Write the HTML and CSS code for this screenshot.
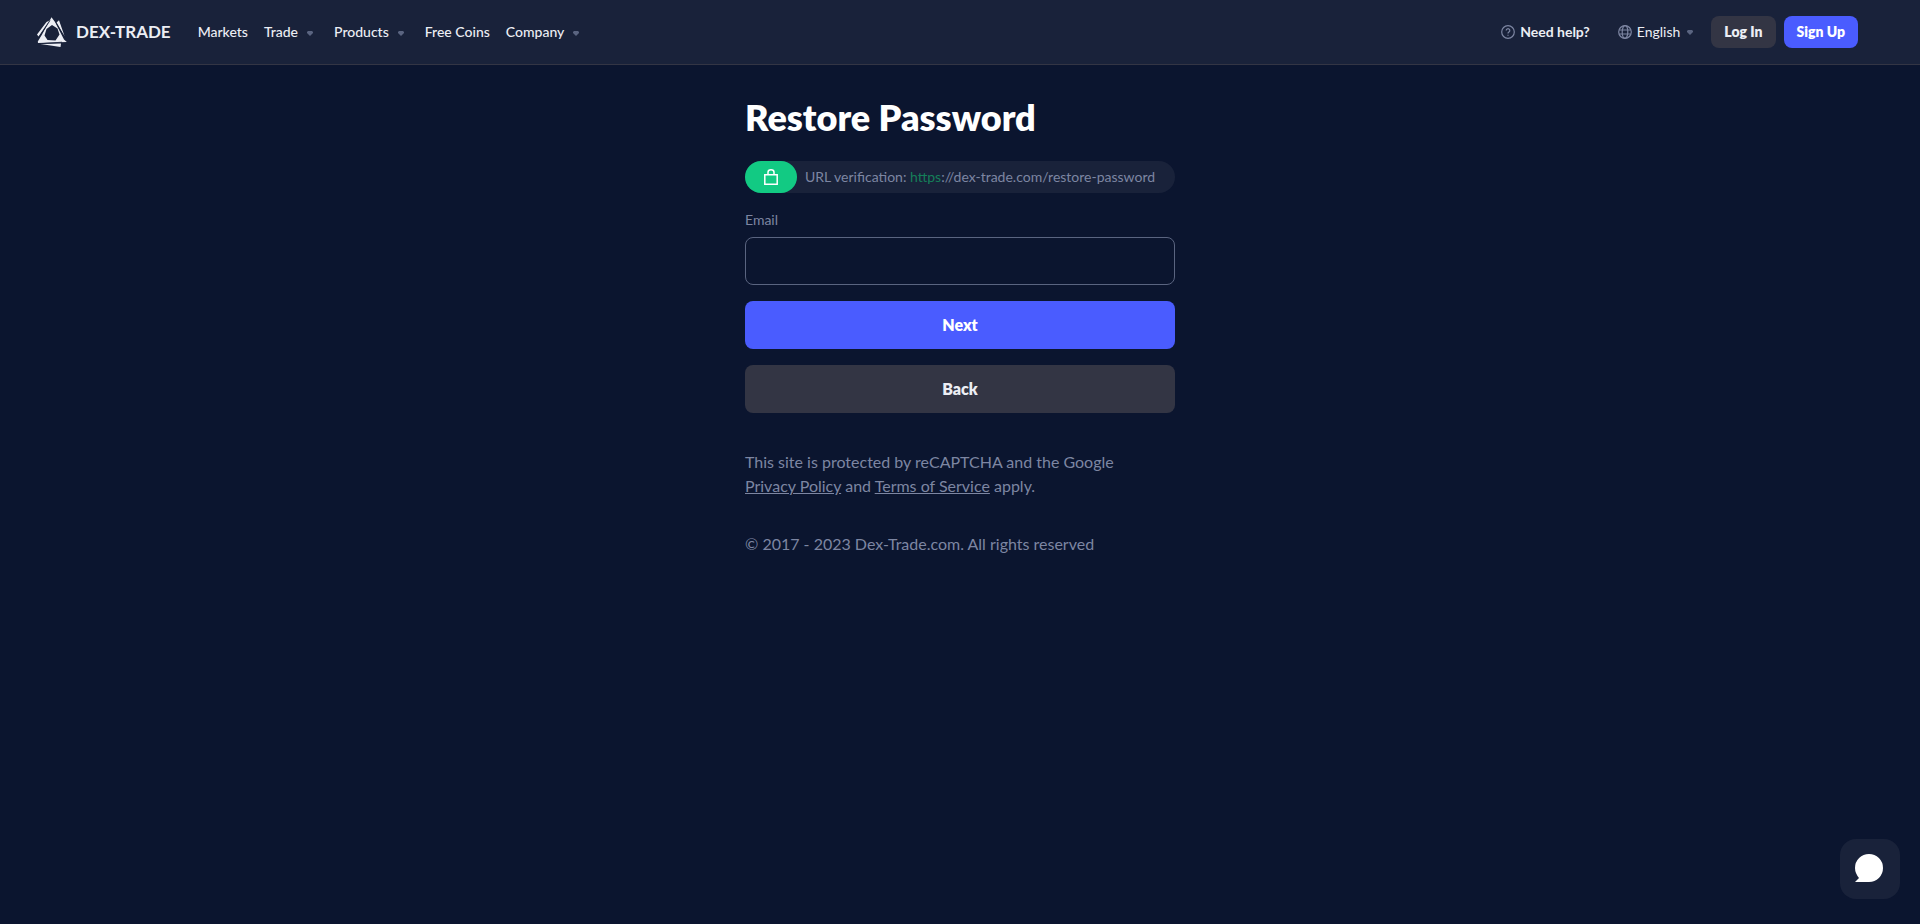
FILE: index.html
```html
<!DOCTYPE html>
<html lang="en">
<head>
<meta charset="utf-8">
<meta name="viewport" content="width=device-width, initial-scale=1">
<title>Restore Password | Dex-Trade</title>
<link rel="stylesheet" href="styles.css">
</head>
<body>
<header class="header">
  <a class="logo" href="#">
    <svg class="logo-mark" viewBox="0 0 30 30" aria-hidden="true">
      <path fill="#eceef4" fill-rule="evenodd" d="M14.500 .3 18 5 27 22.500 29.800 25 1 26 .8 24.500 5 17.500ZM15 8 9.500 12 7.500 18.500 10.500 23 18.500 23.500 22.500 17.500 20.500 11.500Z"/>
      <path fill="#eceef4" d="M19.500 5.500 22 3.300 27.500 19ZM9.500 5 12.500 3.500 1.500 19.500 0 17.500ZM3.500 27 24 26.600 23.500 30Z"/>
      <path stroke="#19223a" stroke-width=".8" fill="none" d="M13 3.500 3 18.800M18 3.500 27.500 21M5 26.600 25 25.200"/>
    </svg>
    <span>DEX-TRADE</span>
  </a>
  <nav class="nav">
    <a href="#">Markets</a>
    <button class="menu" type="button">Trade<svg class="caret" viewBox="0 0 6 5" aria-hidden="true"><path d="M1 0H5L6 1V2L3 5 0 2V1Z"/></svg></button>
    <button class="menu" type="button">Products<svg class="caret" viewBox="0 0 6 5" aria-hidden="true"><path d="M1 0H5L6 1V2L3 5 0 2V1Z"/></svg></button>
    <a href="#">Free Coins</a>
    <button class="menu" type="button">Company<svg class="caret" viewBox="0 0 6 5" aria-hidden="true"><path d="M1 0H5L6 1V2L3 5 0 2V1Z"/></svg></button>
  </nav>
  <div class="actions">
    <a class="help" href="#"><svg class="icon" viewBox="0 0 14 14" aria-hidden="true"><circle cx="7" cy="7" r="6.300"/><path d="M5.200 5.500a1.800 1.800 0 1 1 2.700 1.600Q7 7.600 7 8.500M7 9.700v1.100"/></svg>Need help?</a>
    <button class="language" type="button"><svg class="icon" viewBox="0 0 14 14" aria-hidden="true"><circle cx="7" cy="7" r="6.300"/><ellipse cx="7" cy="7" rx="2.800" ry="6.300"/><path d="M1.200 5H12.800M1.200 9H12.800"/></svg>English<svg class="caret" viewBox="0 0 6 5" aria-hidden="true"><path d="M1 0H5L6 1V2L3 5 0 2V1Z"/></svg></button>
    <a class="btn btn-dark" href="#">Log In</a>
    <a class="btn btn-primary" href="#">Sign Up</a>
  </div>
</header>
<main class="page">
  <h1 class="title">Restore Password</h1>
  <div class="url">
    <span class="url-lock"><svg viewBox="0 0 14 16" aria-hidden="true"><path d="M.8 5.700H13.200V15.200H.8ZM4 5.500V3.300Q4 .8 7 .8T10 3.300V5.500"/></svg></span>
    <span class="url-text">URL verification: <span class="secure">https</span>://dex-trade.com/restore-password</span>
  </div>
  <form class="form">
    <label class="label" for="email">Email</label>
    <input class="field" id="email" type="email" name="email">
    <button class="submit btn-primary" type="submit">Next</button>
    <button class="submit btn-dark" type="button">Back</button>
  </form>
  <p class="legal">This site is protected by reCAPTCHA and the Google<br><a href="#">Privacy Policy</a> and <a href="#">Terms of Service</a> apply.</p>
  <p class="copyright">© 2017 - 2023 Dex-Trade.com. All rights reserved</p>
</main>
<button class="chat" type="button" aria-label="Open chat"><svg viewBox="0 0 28 28" aria-hidden="true"><path d="M14 0A14 14 0 0 1 14 28H0L4 24Q0 19 0 14A14 14 0 0 1 14 0Z"/></svg></button>
</body>
</html>
```
FILE: styles.css
```css
* {
  box-sizing: border-box;
}

body {
  margin: 0;
  min-height: 100vh;
  background: #0b152f;
  color: #7d86a2;
  font-family: Lato, "Liberation Sans", sans-serif;
  font-size: 16px;
  line-height: 24px;
}

a {
  color: inherit;
}

button {
  margin: 0;
  padding: 0;
  border: 0;
  background: none;
  color: inherit;
  font: inherit;
  cursor: pointer;
}

.header {
  display: flex;
  align-items: center;
  padding: 16px 62px 16px 37px;
  border-bottom: 1px solid #333544;
  background: #19223a;
  color: #eceef4;
  font-size: 14px;
  line-height: 20px;
}

.header a {
  text-decoration: none;
}

.logo {
  display: flex;
  align-items: center;
  gap: 9px;
  font-size: 17px;
  font-weight: 700;
}

.logo-mark {
  width: 30px;
  height: 30px;
}

.nav {
  display: flex;
  gap: 16px;
  margin-left: 27px;
  font-weight: 500;
}

.menu {
  display: flex;
  align-items: center;
  gap: 9px;
  padding-right: 5px;
}

.caret {
  width: 6px;
  height: 5px;
  margin-top: 3px;
  fill: #5a6480;
}

.actions {
  display: flex;
  align-items: center;
  gap: 8px;
  margin-left: auto;
}

.help,
.language {
  display: flex;
  align-items: center;
  gap: 5px;
}

.help {
  margin-right: 20px;
  font-weight: 700;
}

.language {
  margin-right: 10px;
}

.language .caret {
  margin-top: 0;
  margin-left: 2px;
}

.icon {
  width: 14px;
  height: 14px;
  fill: none;
  stroke: #7d86a2;
  stroke-width: 1.2;
}

.btn {
  padding: 6px 13px;
  border-radius: 8px;
  font-weight: 800;
}

.btn-dark {
  background: #333544;
  color: #eceef4;
}

.btn-primary {
  background: #4a5cff;
  color: #fff;
}

.page {
  max-width: 430px;
  margin: 0 auto;
  padding-top: 30px;
}

.title {
  margin: 0 0 22px;
  color: #fff;
  font-size: 36px;
  font-weight: 800;
  line-height: 44px;
}

.url {
  display: flex;
  align-items: center;
  gap: 8px;
  border-radius: 16px;
  background: #19223a;
  font-size: 14px;
}

.url-lock {
  display: flex;
  align-items: center;
  justify-content: center;
  width: 52px;
  height: 32px;
  border-radius: 16px;
  background: #12ca83;
}

.url-lock svg {
  width: 14px;
  height: 16px;
  fill: none;
  stroke: #fff;
  stroke-width: 1.5;
}

.secure {
  color: #157f59;
}

.form {
  display: flex;
  flex-direction: column;
  margin-top: 17px;
}

.label {
  margin-bottom: 7px;
  font-size: 14px;
  line-height: 20px;
}

.field {
  height: 48px;
  padding: 0 16px;
  border: 1px solid #5a6480;
  border-radius: 8px;
  background: transparent;
  color: #fff;
  font: inherit;
}

.submit {
  height: 48px;
  margin-top: 16px;
  border-radius: 8px;
  font-weight: 800;
}

.legal {
  margin: 37px 0 34px;
}

.copyright {
  margin: 0;
}

.chat {
  position: fixed;
  right: 20px;
  bottom: 25px;
  display: flex;
  align-items: center;
  justify-content: center;
  width: 60px;
  height: 60px;
  padding: 0 2px 2px 0;
  border-radius: 16px;
  background: #19223a;
}

.chat svg {
  width: 28px;
  height: 28px;
  fill: #fff;
}
```
